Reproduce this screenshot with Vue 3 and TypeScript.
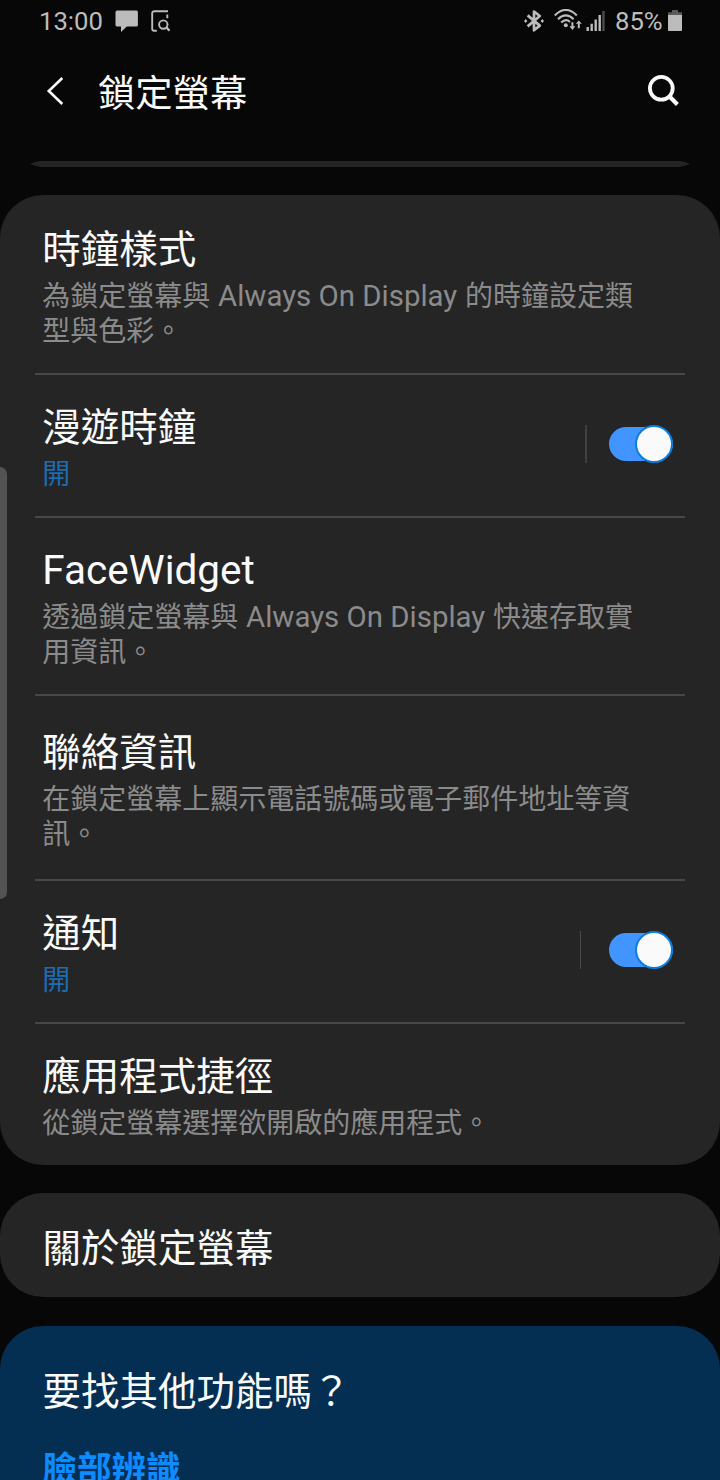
<script setup lang="ts">
interface SettingItem {
  id: string
  title: string
  latin?: boolean
  lines?: string[][]
  on?: boolean
}

// Each description line is a list of runs: CJK, Latin, CJK.
const items: SettingItem[] = [
  {
    id: 'clock-style',
    title: '時鐘樣式',
    lines: [['為鎖定螢幕與', 'Always On Display', '的時鐘設定類'], ['型與色彩。']],
  },
  { id: 'roaming', title: '漫遊時鐘', on: true },
  {
    id: 'facewidget',
    title: 'FaceWidget',
    latin: true,
    lines: [['透過鎖定螢幕與', 'Always On Display', '快速存取實'], ['用資訊。']],
  },
  { id: 'contact', title: '聯絡資訊', lines: [['在鎖定螢幕上顯示電話號碼或電子郵件地址等資'], ['訊。']] },
  { id: 'notify', title: '通知', on: true },
  { id: 'shortcuts', title: '應用程式捷徑', lines: [['從鎖定螢幕選擇欲開啟的應用程式。']] },
]
</script>

<template>
  <div class="screen" lang="zh-Hant">
    <div class="status">
      <span class="time">13:00</span>
      <svg class="chat" width="24" height="24" viewBox="0 0 24 24">
        <path d="M2 .6h19.400a1.500 1.500 0 0 1 1.500 1.500v12.800a1.500 1.500 0 0 1-1.500 1.500H11.800L6 22v-5.600H2a1.500 1.500 0 0 1-1.500-1.500V2.100A1.500 1.500 0 0 1 2 .6z" fill="#bcbcbc" />
      </svg>
      <svg class="doc" width="20" height="22" viewBox="0 0 20 22" fill="none" stroke="#bcbcbc" stroke-width="1.900">
        <path d="M17 1.200H3.200a2 2 0 0 0-2 2v15.600a2 2 0 0 0 2 2h2.600M16.300 4.400v3.800" />
        <circle cx="12.300" cy="14.600" r="4.200" />
        <path d="M15.200 17.200l3.300 3.600" stroke-width="2.200" />
      </svg>
      <span class="spacer"></span>
      <svg class="bt" width="20" height="24" viewBox="0 0 20 24" fill="none" stroke="#bcbcbc" stroke-width="2.700">
        <path d="M3.600 6.400L15.800 16.600L10 21.300V2.500L15.800 7L3.600 17.400" stroke-linejoin="round" />
        <path d="M0 12l1.700-2L3.400 12l-1.700 2zM16.600 12l1.700-2L20 12l-1.700 2z" fill="#bcbcbc" stroke="none" />
      </svg>
      <svg class="wifi" width="28" height="22" viewBox="0 0 28 22" fill="none" stroke="#bcbcbc" stroke-width="2.100">
        <path d="M.8 6.400Q11.800-4.400 22.800 6.400M4 10.200Q11.800 2.600 19.600 10.200M7.200 13.600Q11.800 9 16 12.900" />
        <circle cx="11.800" cy="16.200" r="2" fill="#bcbcbc" stroke="none" />
        <path d="M18.400 13.200v5.500M24.800 19.200v-5" stroke-width="2" />
        <path d="M15.400 17.300h6L18.400 21zM21.800 14.800h6L24.800 11.400z" fill="#bcbcbc" stroke="none" />
      </svg>
      <svg class="signal" width="19" height="22" viewBox="0 0 19 22" fill="#bcbcbc">
        <path d="M.5 17h2.400v4H.5zM4.500 13.800h2.400V21H4.500zM8.500 9.500h2.400V21H8.500zM12.500 5h2.400v16h-2.400z" />
        <path d="M16.300 1h2.400v20h-2.400z" fill="#4c4c4c" />
      </svg>
      <span class="percent">85%</span>
      <svg class="battery" width="14" height="22" viewBox="0 0 14 22">
        <path d="M4 0h6v2.200h4V6H0V2.200h4z" fill="#5a5a5a" />
        <path d="M0 5h14v15a1 1 0 0 1-1 1H1a1 1 0 0 1-1-1z" fill="#bcbcbc" />
      </svg>
    </div>

    <header class="appbar">
      <svg class="back" width="18" height="28" viewBox="0 0 18 28" fill="none" stroke="#fafafa" stroke-width="2.600">
        <path d="M16.300 1L2.800 14l13.500 13" />
      </svg>
      <h1>鎖定螢幕</h1>
      <svg class="search" width="32" height="32" viewBox="0 0 32 32" fill="none" stroke="#fafafa">
        <circle cx="13.300" cy="13.300" r="11.400" stroke-width="3.800" />
        <path d="M21.500 21.500l7.900 7.900" stroke-width="4.200" />
      </svg>
    </header>

    <div class="previous"></div>

    <section class="card">
      <div v-for="item in items" :key="item.id" class="item" :class="item.id">
        <div class="text">
          <div class="title"><span :class="{ latin: item.latin }">{{ item.title }}</span></div>
          <div v-if="item.on" class="desc state">開</div>
          <div v-for="(line, i) in item.lines" :key="i" class="desc">
            <template v-for="(run, j) in line" :key="j"><span :class="{ inline: j === 1 }">{{ run }}</span></template>
          </div>
        </div>
        <template v-if="item.on">
          <span class="rule"></span>
          <span class="switch"><span class="knob"></span></span>
        </template>
      </div>
    </section>

    <section class="card about">
      <div class="title">關於鎖定螢幕</div>
    </section>

    <section class="card help">
      <div class="title">要找其他功能嗎？</div>
      <a class="link">臉部辨識</a>
    </section>

    <div class="edge"></div>
  </div>
</template>

<style>
body {
  margin: 0;
  background: #070707;
}
</style>

<style scoped>
.screen {
  position: relative;
  width: 720px;
  height: 1480px;
  overflow: hidden;
  background: #070707;
  color: #fafafa;
  font-family: Roboto, "Noto Sans CJK TC", sans-serif;
  display: flex;
  flex-direction: column;
}
.screen > * {
  flex-shrink: 0;
}
.status {
  height: 43px;
  margin-bottom: 1px;
  box-sizing: border-box;
  padding: 0 38px 0 39px;
  display: flex;
  align-items: center;
  font-size: 25.700px;
  line-height: 43px;
  color: #bcbcbc;
}
.time {
  width: 76px;
}
.doc {
  margin-left: 12px;
  margin-top: -1px;
}
.spacer {
  flex: 1;
}
.bt {
  margin-top: -1px;
}
.wifi {
  margin-left: 10px;
  margin-top: -3px;
}
.signal {
  margin-left: 4px;
  margin-top: -2px;
}
.percent {
  margin-left: 10px;
  width: 48px;
}
.battery {
  margin-left: 5px;
  margin-top: -1px;
}
.appbar {
  height: 117px;
  display: flex;
  align-items: flex-start;
}
.back {
  margin: 33px 0 0 46px;
}
h1 {
  margin: 27px 0 0 34px;
  flex: 1;
  font-size: 37.300px;
  font-weight: 400;
  line-height: 46px;
}
.search {
  margin: 31px 40px 0 0;
}
.previous {
  height: 6px;
  margin: 0 30px 28px;
  clip-path: polygon(0 50%, 5px 18%, 11px 0, calc(100% - 11px) 0, calc(100% - 5px) 18%, 100% 50%, calc(100% - 5px) 80%, calc(100% - 11px) 100%, 11px 100%, 5px 80%);
  background: #252525;
}
.card {
  background: #252525;
  border-radius: 43px;
  margin-bottom: 28px;
}
.item {
  display: flex;
  box-sizing: border-box;
  margin: 0 35px;
  padding: 29.500px 12px 0 7.300px;
  height: 143px;
  border-bottom: 2px solid #484848;
}
.clock-style {
  height: 180px;
  padding-top: 32px;
}
.facewidget {
  height: 178px;
}
.contact {
  height: 185px;
  padding-top: 34px;
}
.shortcuts {
  height: 141px;
  border-bottom: 0;
}
.text {
  flex: 1;
}
.title {
  height: 46px;
  margin-bottom: 6px;
  font-size: 38.500px;
  line-height: 46px;
  white-space: nowrap;
}
.latin {
  font-size: 40.500px;
  line-height: 1;
}
.desc {
  height: 35px;
  font-size: 28px;
  line-height: 35px;
  color: #8b8b8b;
  white-space: nowrap;
}
.inline {
  margin: 0 7.700px;
  font-size: 29.400px;
  line-height: 1;
}
.state {
  color: #1a6cb3;
}
.rule {
  width: 2px;
  height: 38px;
  margin: 20.500px 22px 0 0;
  background: #404040;
}
.notify .rule {
  width: 1px;
  margin-right: 28px;
  background: #4a4a4a;
}
.switch {
  display: flex;
  justify-content: flex-end;
  align-items: center;
  width: 64px;
  height: 34px;
  margin-top: 22.500px;
  border-radius: 17px;
  background: #4294ff;
}
.knob {
  flex: none;
  box-sizing: border-box;
  width: 38px;
  height: 38px;
  border: 2px solid #0b7ddd;
  border-radius: 50%;
  background: #fafafa;
}
.about {
  height: 104px;
  box-sizing: border-box;
  padding: 33px 42.500px 0;
  margin-bottom: 29px;
}
.help {
  height: 240px;
  margin-bottom: 0;
  box-sizing: border-box;
  padding: 43px 42.500px 0;
  background: #042f52;
}
.link {
  display: block;
  margin-top: 31px;
  font-size: 34.500px;
  font-weight: 700;
  line-height: 46px;
  color: #0d8bff;
}
.edge {
  position: absolute;
  left: 0;
  top: 467px;
  width: 7px;
  height: 432px;
  border-radius: 0 7px 7px 0;
  background: #535353;
}
</style>
